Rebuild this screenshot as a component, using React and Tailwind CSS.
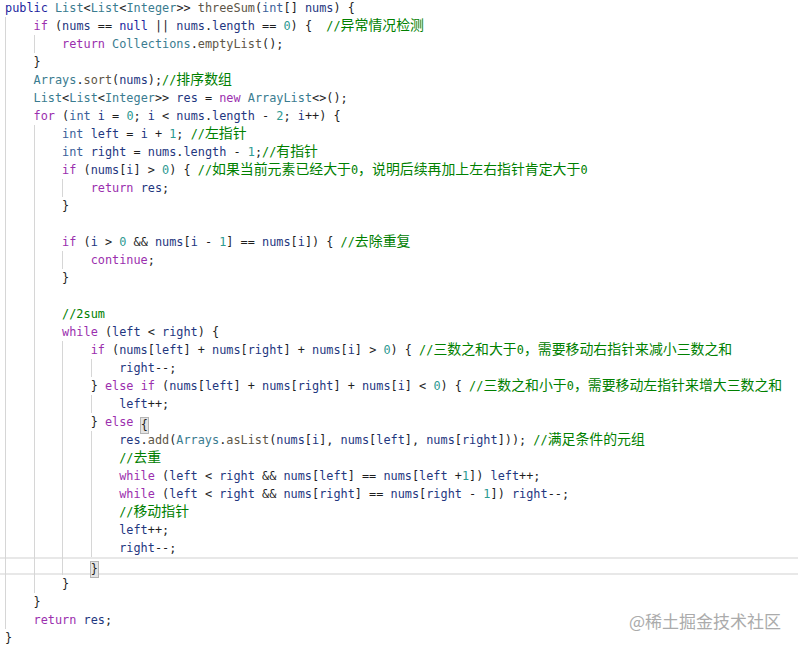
import React from "react";

const LINES = [
  [0, "public List<List<Integer>> threeSum(int[] nums) {"],
  [1, "if (nums == null || nums.length == 0) {  //异常情况检测"],
  [2, "return Collections.emptyList();"],
  [1, "}"],
  [1, "Arrays.sort(nums);//排序数组"],
  [1, "List<List<Integer>> res = new ArrayList<>();"],
  [1, "for (int i = 0; i < nums.length - 2; i++) {"],
  [2, "int left = i + 1; //左指针"],
  [2, "int right = nums.length - 1;//有指针"],
  [2, "if (nums[i] > 0) { //如果当前元素已经大于0，说明后续再加上左右指针肯定大于0"],
  [3, "return res;"],
  [2, "}"],
  [2, ""],
  [2, "if (i > 0 && nums[i - 1] == nums[i]) { //去除重复"],
  [3, "continue;"],
  [2, "}"],
  [2, ""],
  [2, "//2sum"],
  [2, "while (left < right) {"],
  [3, "if (nums[left] + nums[right] + nums[i] > 0) { //三数之和大于0，需要移动右指针来减小三数之和"],
  [4, "right--;"],
  [3, "} else if (nums[left] + nums[right] + nums[i] < 0) { //三数之和小于0，需要移动左指针来增大三数之和"],
  [4, "left++;"],
  [3, "} else {"],
  [4, "res.add(Arrays.asList(nums[i], nums[left], nums[right])); //满足条件的元组"],
  [4, "//去重"],
  [4, "while (left < right && nums[left] == nums[left +1]) left++;"],
  [4, "while (left < right && nums[right] == nums[right - 1]) right--;"],
  [4, "//移动指针"],
  [4, "left++;"],
  [4, "right--;"],
  [3, "}"],
  [2, "}"],
  [1, "}"],
  [1, "return res;"],
  [0, "}"],
];

const CONTROL = new Set(["if", "return", "for", "while", "else", "continue", "new"]);
const BLUE = new Set(["public", "null"]);
const PRIM = new Set(["int"]);

const CLS = {
  control: "text-[#9b2fae]",
  blue: "text-[#1c1f9e]",
  prim: "text-[#3b5f9a]",
  type: "text-[#3a7c90]",
  method: "text-[#5e5647]",
  variable: "text-[#1f377f]",
  number: "text-[#2e9a92]",
  comment: "text-[#008000]",
  punct: "text-[#1e1e1e]",
};

function splitCJK(text, keyPrefix, colorCls) {
  const parts = text.split(/([\u3000-\u9fff\uff00-\uffef]+)/);
  return parts
    .filter((p) => p.length > 0)
    .map((p, i) =>
      /[\u3000-\u9fff\uff00-\uffef]/.test(p) ? (
        <span
          key={keyPrefix + "c" + i}
          className={`${colorCls} leading-[0] text-[13.9px] font-['Noto_Sans_CJK_SC',sans-serif]`}
        >
          {p}
        </span>
      ) : (
        <span key={keyPrefix + "a" + i} className={colorCls}>
          {p}
        </span>
      )
    );
}

function tokenize(line) {
  const out = [];
  const re = /(\/\/.*$)|([A-Za-z_]\w*)|(\d+)|(\s+)|(.)/g;
  let m;
  let idx = 0;
  while ((m = re.exec(line)) !== null) {
    const key = "t" + idx++;
    if (m[1]) {
      out.push(...splitCJK(m[1], key, CLS.comment));
    } else if (m[2]) {
      const w = m[2];
      const rest = line.slice(re.lastIndex);
      let c;
      if (CONTROL.has(w)) c = CLS.control;
      else if (BLUE.has(w)) c = CLS.blue;
      else if (PRIM.has(w)) c = CLS.prim;
      else if (/^[A-Z]/.test(w)) c = CLS.type;
      else if (/^\(/.test(rest)) c = CLS.method;
      else c = CLS.variable;
      out.push(
        <span key={key} className={c}>
          {w}
        </span>
      );
    } else if (m[3]) {
      out.push(
        <span key={key} className={CLS.number}>
          {m[3]}
        </span>
      );
    } else if (m[4]) {
      out.push(<span key={key}>{m[4]}</span>);
    } else {
      out.push(
        <span key={key} className={CLS.punct}>
          {m[5]}
        </span>
      );
    }
  }
  return out;
}

function Bracket({ ch }) {
  return (
    <span className="inline-block h-[15px] leading-[15px] align-[-3px] bg-[#e4e4e4] outline outline-1 outline-[#b4b4b4] text-[#1e1e1e]">
      {ch}
    </span>
  );
}

function renderLine(i, text) {
  if (i === 23) {
    return (
      <>
        {tokenize("} else ")}
        <Bracket ch="{" />
      </>
    );
  }
  if (i === 31) {
    return <Bracket ch="}" />;
  }
  return tokenize(text);
}

export default function App() {
  return (
    <div className="relative w-[798px] h-[650px] overflow-hidden bg-white">
      <div className="mt-[-1px] pl-[5px] font-['DejaVu_Sans_Mono',monospace] text-[11.86px] leading-[18px] text-[#1e1e1e]">
        {LINES.map(([indent, text], i) => (
          <div
            key={i}
            className={
              "flex h-[18px] whitespace-pre items-stretch " +
              (i === 31
                ? "-ml-[5px] pl-[5px] shadow-[inset_0_2px_0_#e8e8e8,inset_0_-2px_0_#e8e8e8]"
                : "")
            }
          >
            {Array.from({ length: indent }).map((_, k) => (
              <span
                key={k}
                className="inline-block shrink-0 w-[28.56px] h-[18px] border-l border-[#d6d6d6]"
              />
            ))}
            <span className="block h-[18px] whitespace-pre">{renderLine(i, text)}</span>
          </div>
        ))}
      </div>
      <div className="absolute right-[17px] top-[608px] text-[17px] leading-[26px] text-[#ababab] font-['Noto_Sans_CJK_SC',sans-serif] [text-shadow:0_0_1px_#ffffff]">
        @稀土掘金技术社区
      </div>
    </div>
  );
}
